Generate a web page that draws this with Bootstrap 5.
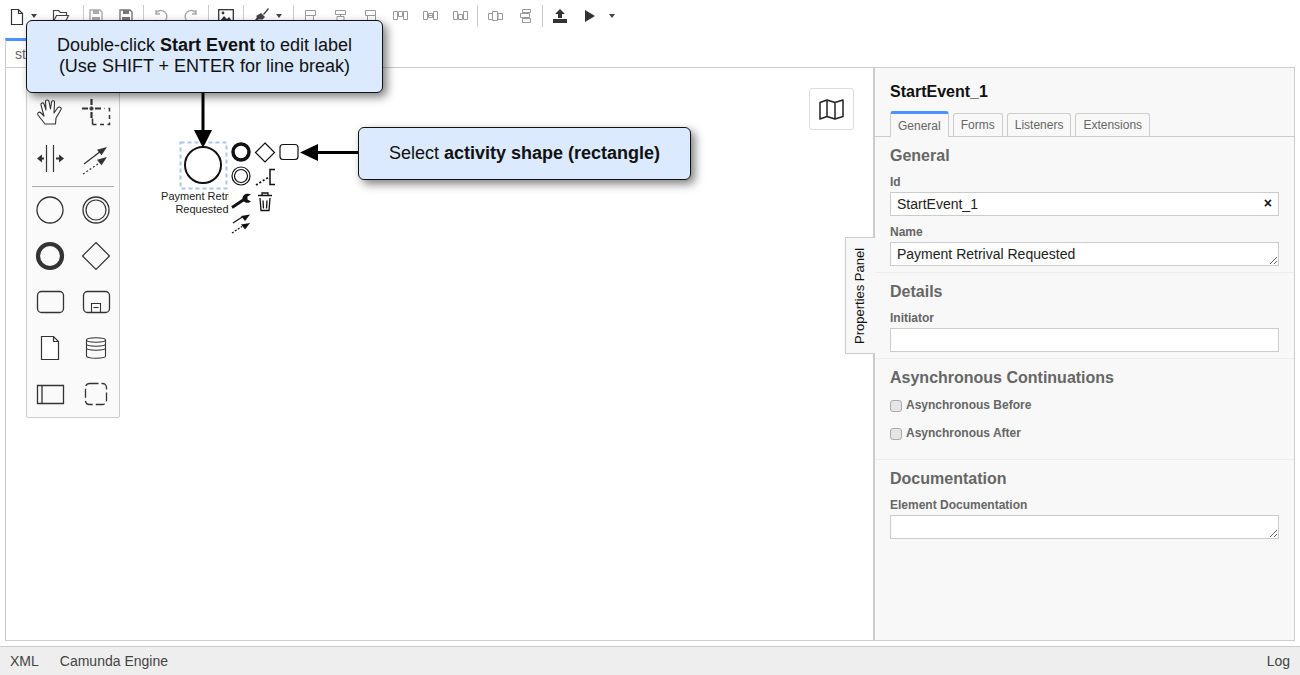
<!DOCTYPE html>
<html lang="en">
<head>
    <meta charset="UTF-8">
    <meta name="viewport" content="width=device-width, initial-scale=1">
    <title>Camunda Modeler</title>
    <link href="https://cdn.jsdelivr.net/npm/bootstrap@5.3.0/dist/css/bootstrap.min.css" rel="stylesheet">
    <style>
        html, body { height: 675px; overflow: hidden; }
        body { font-family: "Liberation Sans", Arial, sans-serif; background: #fff; color: #333; position: relative; }

        /* toolbar */
        .tool-row { height: 38px; padding-left: 5px; }
        .tool-btn { width: 24px; height: 32px; display: flex; align-items: center; justify-content: center; flex: none; }
        .tool-caret { width: 10px; }
        .tool-caret i { border-top: 4px solid #444; border-left: 3px solid transparent; border-right: 3px solid transparent; }
        .tool-gap { gap: 6px; }
        .tool-sep { width: 1px; height: 22px; background: #ccc; margin: 5px 5px 0; flex: none; }
        .tool-sep-a { margin-left: 10px; margin-right: 0; }
        .tool-sep-b { margin-left: 9px; margin-right: 4px; }
        .tool-open { margin-left: 10px; }
        .tool-caret-near { margin-left: 1px; }
        .tool-caret-end { margin-left: 5px; }

        /* file tabs */
        .file-tabs { height: 29px; }
        .file-tab { width: 114px; margin-left: 5px; border: 1px solid #ccc; border-top: 3px solid #4d90ff; border-bottom: 0; padding: 4px 0 0 9px; font-size: 14px; line-height: 18px; color: #666; }

        .work-area { height: 574px; margin: 0 5px; border: 1px solid #ccc; }
        .diagram-area { position: relative; }

        /* palette */
        .tool-palette { position: absolute; left: 20px; top: 20px; width: 94px; background: #fafafa; border: 1px solid #ccc; border-radius: 2px; display: grid; grid-template-columns: 46px 46px; }
        .tool-palette svg { width: 46px; height: 46px; display: block; }
        .palette-rule { grid-column: 1 / 3; height: 1px; background: #aaa; margin: 5px 5px 0; box-sizing: content-box; }
        .map-toggle { position: absolute; left: 803px; top: 20px; width: 45px; height: 42px; background: #fff; border: 1px solid #ddd; border-radius: 3px; display: flex; align-items: center; justify-content: center; }

        /* properties */
        .props-panel { width: 421px; flex: none; background: #f8f8f8; border-left: 2px solid #ccc; position: relative; }
        .props-toggle { position: absolute; left: -30px; top: 169px; width: 30px; height: 117px; background: #f8f8f8; border: 1px solid #ccc; border-left: 0; font-size: 13px; color: #111; writing-mode: vertical-rl; transform: rotate(180deg); text-align: center; line-height: 28px; }
        .props-title { font-size: 16px; font-weight: 700; color: #111; padding: 14px 0 0 15px; height: 44px; line-height: 19px; }
        .props-tabs { height: 25px; padding-left: 15px; gap: 4px; border-bottom: 1px solid #ccc; }
        .props-tab { height: 24px; padding: 4px 7px 0; border: 1px solid #ccc; border-bottom: 0; border-radius: 3px 3px 0 0; font-size: 12px; line-height: 15px; color: #666; margin-top: 1px; }
        .props-tab-on { margin-top: -1px; margin-bottom: -1px; padding-top: 5px; border-top: 3px solid #4d90ff; background: #f8f8f8; height: 26px; }
        .props-group { padding: 10px 15px 0 15px; border-bottom: 1px solid #eee; }
        .group-title { font-size: 16px; font-weight: 700; color: #666; line-height: 18px; margin: 0 0 10px; }
        .group-title-tight { margin-bottom: 11px; }
        .field-label { display: block; font-size: 12px; font-weight: 700; color: #666; line-height: 14px; margin-bottom: 3px; }
        .field-box { height: 24px; min-height: 24px; border: 1px solid #ccc; border-radius: 0; font-size: 14px; line-height: 16px; padding: 3px 6px; color: #222; background: #fff; display: block; width: 389px; }
        .field-wrap { position: relative; width: 389px; margin-bottom: 9px; }
        .field-clear { position: absolute; right: 7px; top: 3px; font-size: 14px; font-weight: 700; line-height: 16px; color: #111; }
        .field-check { display: flex; align-items: center; height: 14px; margin-bottom: 14px; font-size: 12px; font-weight: 700; color: #666; }
        .field-check input { width: 12px; height: 12px; margin: 2px 4px 0 0; background-color: #e6e6e6; border: 1px solid #aaa; border-radius: 2px; }
        .group-general { height: 136px; }
        .group-details { height: 86px; }
        .group-async { height: 101px; }

        /* footer */
        .status-bar { height: 29px; margin-top: 5px; background: #eee; border-top: 1px solid #ccc; font-size: 14px; color: #444; padding: 0 10px; line-height: 28px; }
        .status-engine { margin-left: 21px; }

        /* callouts */
        .hint-box { position: absolute; background: #dbeafe; border: 1px solid #111; border-radius: 6px; box-shadow: 4px 4px 10px rgba(0,0,0,.5); color: #111; font-size: 18px; line-height: 21px; text-align: center; display: flex; align-items: center; justify-content: center; }
        .hint-one { left: 26px; top: 20px; width: 357px; height: 73px; padding-bottom: 2px; }
        .hint-two { left: 358px; top: 127px; width: 333px; height: 53px; }
        .diagram-layer { position: absolute; left: 0; top: 0; pointer-events: none; }
        .diagram-label { font-family: "Liberation Sans", Arial, sans-serif; font-size: 11px; fill: #222; }
    </style>
</head>
<body>
    <div class="tool-row d-flex align-items-start">
        <div class="tool-btn"><svg width="16" height="18" viewBox="0 0 16 18"><path d="M2.5 2.5h7l4 4v11h-11z M9.500 2.500v4h4" fill="#fff" stroke="#333" stroke-width="1.200"/></svg></div>
        <div class="tool-btn tool-caret"><i></i></div>
        <div class="tool-btn tool-open"><svg width="18" height="16" viewBox="0 0 18 16"><path d="M1.500 13.500v-11h5l2 2h6v3M1.500 13.500l3-6h12l-3 6z" fill="none" stroke="#444" stroke-width="1.200"/></svg></div>
        <div class="tool-sep tool-sep-a"></div>
        <div class="d-flex tool-gap">
            <div class="tool-btn"><svg width="16" height="16" viewBox="0 0 16 16"><path d="M2 2h10l2 2v10H2z" fill="none" stroke="#aaa" stroke-width="1.400"/><path d="M5 2h6v4H5zM4 9h8v5H4z" fill="#aaa"/></svg></div>
            <div class="tool-btn"><svg width="16" height="16" viewBox="0 0 16 16"><path d="M2 2h10l2 2v10H2z" fill="none" stroke="#777" stroke-width="1.400"/><path d="M5 2h6v4H5zM4 9h8v5H4z" fill="#777"/></svg></div>
        </div>
        <div class="tool-sep"></div>
        <div class="d-flex tool-gap">
            <div class="tool-btn"><svg width="16" height="16" viewBox="0 0 16 16"><path d="M3 5a6 6 0 1 1 0 7M3 2v4h4" fill="none" stroke="#aaa" stroke-width="1.400"/></svg></div>
            <div class="tool-btn"><svg width="16" height="16" viewBox="0 0 16 16"><path d="M13 5a6 6 0 1 0 0 7M13 2v4H9" fill="none" stroke="#aaa" stroke-width="1.400"/></svg></div>
        </div>
        <div class="tool-sep"></div>
        <div class="tool-btn"><svg width="16" height="14" viewBox="0 0 16 14"><rect x=".7" y=".7" width="14.600" height="12.600" fill="none" stroke="#333" stroke-width="1.300"/><path d="M2 12l4-5 3 3 2-2 3 4z" fill="#333"/><circle cx="5" cy="4" r="1.400" fill="#333"/></svg></div>
        <div class="tool-sep"></div>
        <div class="tool-btn"><svg width="18" height="18" viewBox="0 0 18 18"><path d="M11 7l5-6 1 1-5 6zM9 6l4 4-3 3-1-1-1 1-1-1-2 2-2-1 2-3-1-1z" fill="#444"/></svg></div>
        <div class="tool-btn tool-caret tool-caret-near"><i></i></div>
        <div class="tool-sep tool-sep-b"></div>
        <div class="d-flex tool-gap">
            <div class="tool-btn"><svg width="13" height="12" viewBox="0 0 13 12"><path d="M1.500 .5h10v5h-10zM1.500 5.500h8v5h-8z" fill="none" stroke="#999"/></svg></div>
            <div class="tool-btn"><svg width="13" height="12" viewBox="0 0 13 12"><path d="M1.500 .5h10v4h-10zM3 6.500h7v4H3zM6.500 4.500v2" fill="none" stroke="#999"/></svg></div>
            <div class="tool-btn"><svg width="13" height="12" viewBox="0 0 13 12"><path d="M1.500 .5h10v5h-10zM3.500 5.500h8v5h-8z" fill="none" stroke="#999"/></svg></div>
            <div class="tool-btn"><svg width="15" height="10" viewBox="0 0 15 10"><path d="M.5 .5h4v8h-4zM5.500 .5h4v5h-4zM10.500 .5h4v8h-4z" fill="none" stroke="#999"/></svg></div>
            <div class="tool-btn"><svg width="15" height="10" viewBox="0 0 15 10"><path d="M.5 .5h4v8h-4zM5.500 2.500h4v4h-4zM10.500 .5h4v8h-4zM4.500 4.500h6" fill="none" stroke="#999"/></svg></div>
            <div class="tool-btn"><svg width="15" height="10" viewBox="0 0 15 10"><path d="M.5 .5h4v8h-4zM5.500 3.500h4v5h-4zM10.500 .5h4v8h-4z" fill="none" stroke="#999"/></svg></div>
        </div>
        <div class="tool-sep"></div>
        <div class="d-flex tool-gap">
            <div class="tool-btn"><svg width="15" height="10" viewBox="0 0 15 10"><path d="M.5 2.500h4v6h-4zM4.500 .5h5v9h-5zM10 2.500h4.500v6H10z" fill="none" stroke="#999"/></svg></div>
            <div class="tool-btn"><svg width="11" height="14" viewBox="0 0 11 14"><path d="M2.500 .5h8v3h-8zM.5 4.500h9v4h-9zM2.500 9.500h8v4h-8z" fill="none" stroke="#999"/></svg></div>
        </div>
        <div class="tool-sep"></div>
        <div class="d-flex tool-gap">
            <div class="tool-btn"><svg width="14" height="14" viewBox="0 0 14 14"><path d="M7 0l5 5H9v4H5V5H2zM0 10h14v4H0z" fill="#333"/></svg></div>
            <div class="tool-btn"><svg width="12" height="14" viewBox="0 0 12 14"><path d="M1 1l10 6-10 6z" fill="#333"/></svg></div>
        </div>
        <div class="tool-btn tool-caret tool-caret-end"><i></i></div>
    </div>

    <div class="file-tabs d-flex">
        <div class="file-tab">start</div>
    </div>

    <div class="work-area d-flex">
        <div class="diagram-area flex-grow-1">
            <div class="tool-palette">
                <!-- hand / lasso -->
                <svg viewBox="0 0 46 46"><path d="M18 35L11 26C10 24 12 22 14 24L17 27L14 16C13.500 14 16 13 17 15L19 21L18.500 12.500C18.500 10.500 21.500 10.500 22 12.500L23.500 20L24.500 13C25 11 28 11.500 27.500 13.500L27 24L30.500 19C32 17 35 18.500 34 20.500L29 29L28.500 35Z" fill="#fff" stroke="#333" stroke-width="1.100" stroke-linejoin="round"/></svg>
                <svg viewBox="0 0 46 46"><path d="M9 19.500h6M16.500 19.500h4M22 19.500h6M18.500 10v6M18.500 17.500v4M18.500 23v6" stroke="#333" stroke-width="2.200" fill="none"/><path d="M19.500 35.500h17v-16h-5" fill="none" stroke="#333" stroke-width="1.500" stroke-dasharray="4 3.500"/><path d="M19.500 35.500v-6" stroke="#333" stroke-width="1.500"/></svg>
                <!-- space / connect -->
                <svg viewBox="0 0 46 46"><path d="M19.500 10v27M26.500 10v27" stroke="#333" stroke-width="1.200" fill="none"/><path d="M10 23.500l5-4v8zM37 23.500l-5-4v8z" fill="#333"/><path d="M13 23.500h4M29 23.500h5" stroke="#333" stroke-width="1.800"/></svg>
                <svg viewBox="0 0 46 46"><path d="M11 29l17-13" stroke="#333" stroke-width="1.300" fill="none"/><path d="M34 12l-10 2.800 4.500 5.500z" fill="#333"/><path d="M10 39l18-12" stroke="#333" stroke-width="1.200" stroke-dasharray="2 2" fill="none"/><path d="M34 22l-10 2.800 4.500 5.500z" fill="#333"/></svg>
                <div class="palette-rule"></div>
                <!-- events / gateway -->
                <svg viewBox="0 0 46 46"><circle cx="23" cy="23" r="13" fill="none" stroke="#333" stroke-width="1.300"/></svg>
                <svg viewBox="0 0 46 46"><circle cx="23" cy="23" r="13" fill="none" stroke="#333" stroke-width="1.300"/><circle cx="23" cy="23" r="10" fill="none" stroke="#333" stroke-width="1.200"/></svg>
                <svg viewBox="0 0 46 46"><circle cx="23" cy="23" r="12" fill="none" stroke="#333" stroke-width="4.200"/></svg>
                <svg viewBox="0 0 46 46"><path d="M23 9.500L36.500 23 23 36.500 9.500 23z" fill="none" stroke="#333" stroke-width="1.200"/></svg>
                <!-- tasks -->
                <svg viewBox="0 0 46 46"><rect x="10.500" y="12.500" width="26" height="21" rx="4" fill="none" stroke="#333" stroke-width="1.300"/></svg>
                <svg viewBox="0 0 46 46"><rect x="10.500" y="12.500" width="26" height="21" rx="4" fill="none" stroke="#333" stroke-width="1.300"/><path d="M18.500 24.500h9v9h-9zM20.500 28.500h5" fill="none" stroke="#333" stroke-width="1.100"/></svg>
                <!-- data -->
                <svg viewBox="0 0 46 46"><path d="M14.500 11.500h12l5 5v18h-17zM26.500 11.500v5h5" fill="#fff" stroke="#333" stroke-width="1.200"/></svg>
                <svg viewBox="0 0 46 46"><path d="M13.500 15c0-3 19-3 19 0v16c0 3-19 3-19 0zM13.500 15c0 3 19 3 19 0M13.500 19c0 3 19 3 19 0M13.500 23c0 3 19 3 19 0" fill="none" stroke="#333" stroke-width="1.100"/></svg>
                <!-- pool / group -->
                <svg viewBox="0 0 46 46"><path d="M10.500 14.500h26v18h-26zM15 14.500v18" fill="none" stroke="#333" stroke-width="1.300"/></svg>
                <svg viewBox="0 0 46 46"><rect x="12.500" y="12.500" width="21" height="21" rx="4" fill="none" stroke="#333" stroke-width="1.300" stroke-dasharray="9 3"/></svg>
            </div>
            <div class="map-toggle"><svg width="25" height="21" viewBox="0 0 25 21"><path d="M1 3.500l7-2.500 8 2.500 8-2.500v16.500l-8 2.500-8-2.500-7 2.500zM8 1v17M16 3.500v17" fill="none" stroke="#222" stroke-width="1.500" stroke-linejoin="round"/></svg></div>
        </div>

        <div class="props-panel">
            <div class="props-toggle">Properties Panel</div>
            <div class="props-title">StartEvent_1</div>
            <div class="props-tabs d-flex">
                <div class="props-tab props-tab-on">General</div>
                <div class="props-tab">Forms</div>
                <div class="props-tab">Listeners</div>
                <div class="props-tab">Extensions</div>
            </div>
            <div class="props-group group-general">
                <h3 class="group-title">General</h3>
                <label class="field-label">Id</label>
                <div class="field-wrap">
                    <input class="field-box" type="text" value="StartEvent_1">
                    <span class="field-clear">×</span>
                </div>
                <label class="field-label">Name</label>
                <div class="field-wrap">
                    <textarea class="field-box" rows="1">Payment Retrival Requested</textarea>
                </div>
            </div>
            <div class="props-group group-details">
                <h3 class="group-title">Details</h3>
                <label class="field-label">Initiator</label>
                <div class="field-wrap"><input class="field-box" type="text"></div>
            </div>
            <div class="props-group group-async">
                <h3 class="group-title group-title-tight">Asynchronous Continuations</h3>
                <label class="field-check"><input class="form-check-input" type="checkbox">Asynchronous Before</label>
                <label class="field-check"><input class="form-check-input" type="checkbox">Asynchronous After</label>
            </div>
            <div class="props-group border-0">
                <h3 class="group-title">Documentation</h3>
                <label class="field-label">Element Documentation</label>
                <div class="field-wrap"><textarea class="field-box" rows="1"></textarea></div>
            </div>
        </div>
    </div>

    <div class="status-bar d-flex">
        <span>XML</span>
        <span class="status-engine flex-grow-1">Camunda Engine</span>
        <span>Log</span>
    </div>

    <!-- diagram shapes on the canvas -->
    <svg class="diagram-layer" width="1300" height="675" viewBox="0 0 1300 675">
        <rect x="180.500" y="142.500" width="46" height="46" fill="none" stroke="#a9c6f5" stroke-width="2" stroke-dasharray="4 3"/>
        <circle cx="203" cy="165" r="18" fill="#fff" stroke="#111" stroke-width="2"/>
        <text class="diagram-label" x="203" y="200" text-anchor="middle">Payment Retrival</text>
        <text class="diagram-label" x="202" y="213" text-anchor="middle">Requested</text>
        <rect x="229" y="140" width="48" height="95" fill="#fff"/>

        <circle cx="241" cy="152" r="8" fill="none" stroke="#111" stroke-width="3.500"/>
        <path d="M265 143l9.500 9.500-9.500 9.500-9.500-9.500z" fill="none" stroke="#111" stroke-width="1.200"/>
        <rect x="280" y="144.500" width="18" height="15" rx="3" fill="none" stroke="#111" stroke-width="1.200"/>
        <circle cx="241" cy="176" r="9" fill="none" stroke="#111" stroke-width="1.200"/>
        <circle cx="241" cy="176" r="6.500" fill="none" stroke="#111" stroke-width="1.200"/>
        <path d="M256 185l13-8" stroke="#111" stroke-width="1.800" stroke-dasharray="2 2" fill="none"/>
        <path d="M275 169.500h-5v15h5" stroke="#111" stroke-width="1.500" fill="none"/>
        <path d="M232 207.500l12-8" stroke="#111" stroke-width="3" fill="none"/>
        <path d="M251 194.500c-4-2-8.500 0-8.500 4 0 3.500 5 6 8.500 3l-3.500-2v-3z" fill="#111"/>
        <path d="M258 195.500h14M262 195v-2h6v2M260 198l1 12.500h8l1-12.500M263 200.500l.5 8M267 200.500l-.5 8" fill="none" stroke="#111" stroke-width="1.300"/>
        <path d="M233 223l10-6.500" stroke="#111" stroke-width="1.200" fill="none"/>
        <path d="M250 214.500l-9 1.500 4 5z" fill="#111"/>
        <path d="M232 233l10-6.500" stroke="#111" stroke-width="1.200" stroke-dasharray="2 1.500" fill="none"/>
        <path d="M250 223l-9 1.500 4 5z" fill="#111"/>

        <path d="M203 92v42" stroke="#000" stroke-width="3" fill="none"/>
        <path d="M194 130h18l-9 18z" fill="#000"/>
        <path d="M358 152.500h-44" stroke="#000" stroke-width="3" fill="none"/>
        <path d="M318 144v17l-18-8.500z" fill="#000"/>
    </svg>

    <div class="hint-box hint-one"><div>Double-click <b>Start Event</b> to edit label<br>(Use SHIFT + ENTER for line break)</div></div>
    <div class="hint-box hint-two"><div>Select <b>activity shape (rectangle)</b></div></div>

    <script src="https://cdn.jsdelivr.net/npm/bootstrap@5.3.0/dist/js/bootstrap.bundle.min.js"></script>
</body>
</html>
